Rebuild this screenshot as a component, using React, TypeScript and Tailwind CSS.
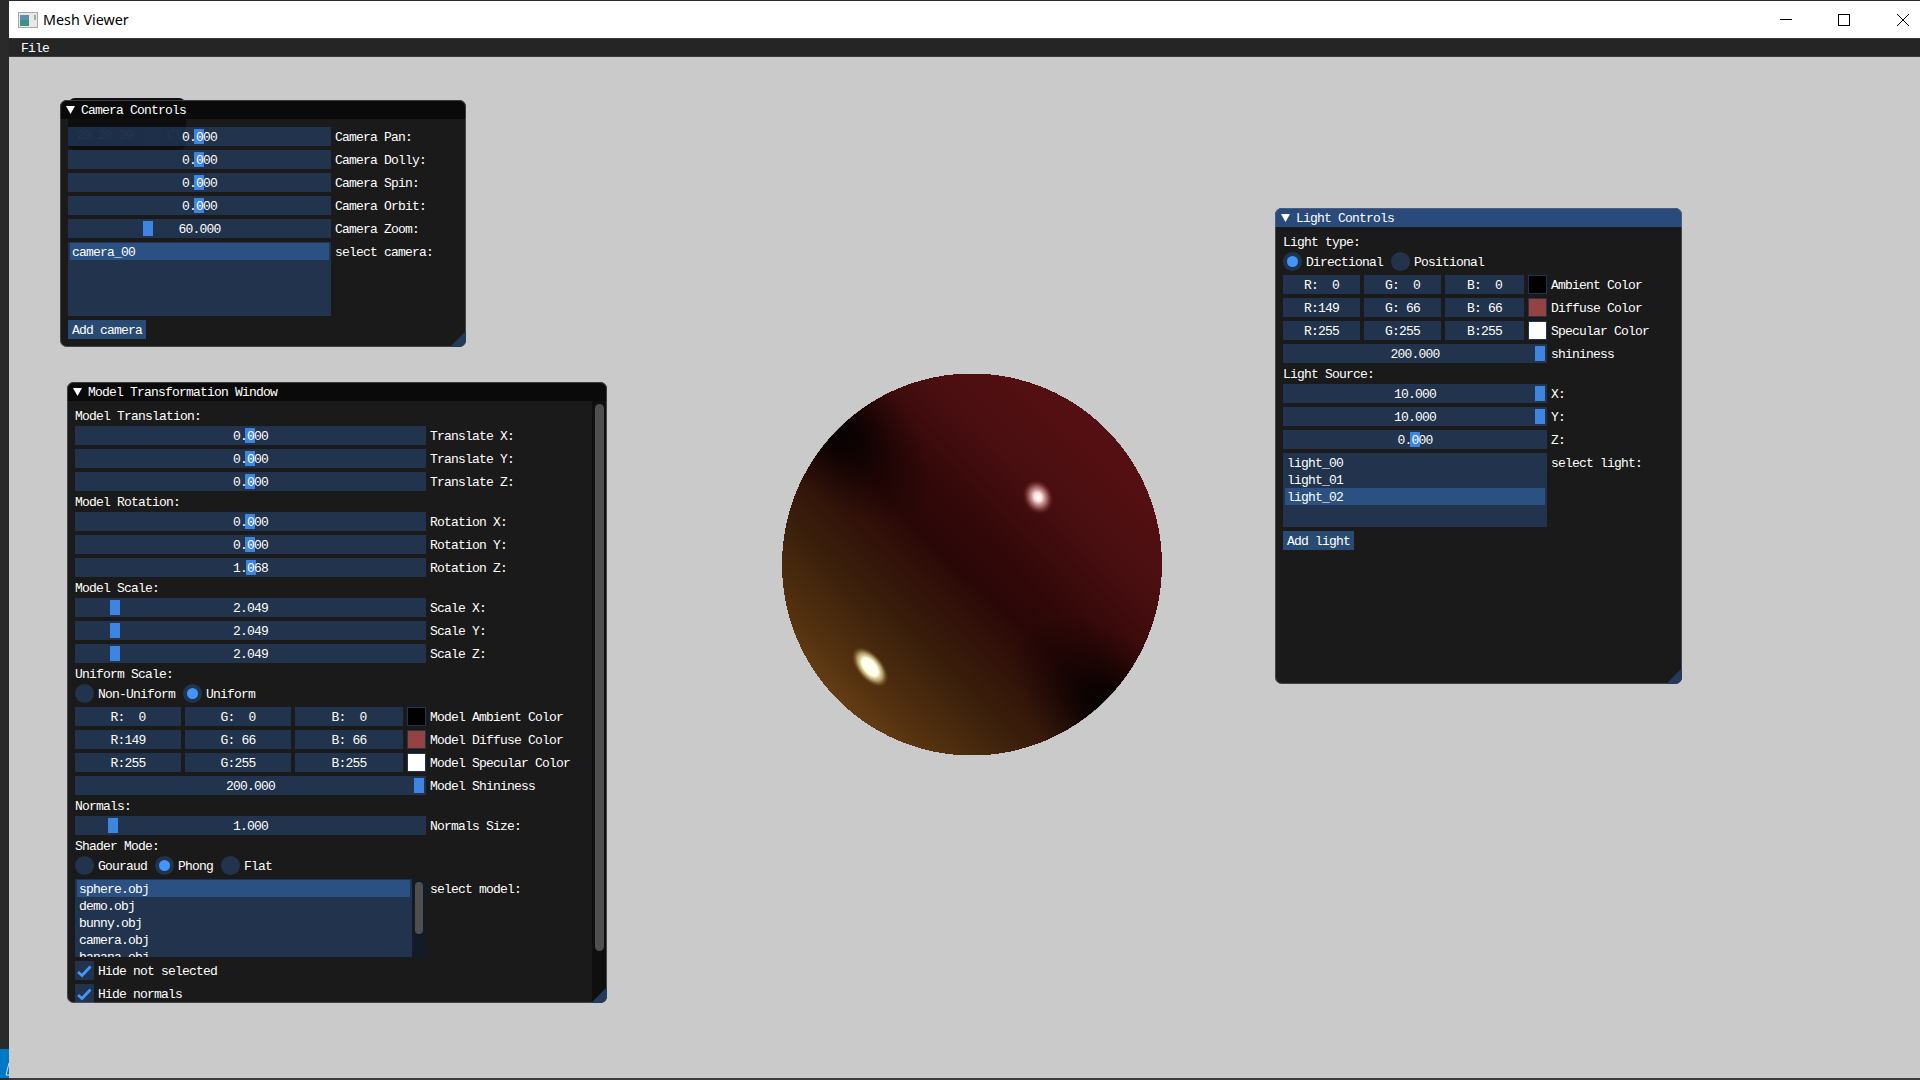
const frame = "bg-[#294a7a8a]";
const font = "font-['Liberation_Mono',monospace] text-[13px] tracking-[-0.8px] leading-[13px] text-white whitespace-pre";

// nudges the mono face down onto the row's baseline
function Txt({ children }: { children: React.ReactNode }) {
  return <span className="relative pt-0.5">{children}</span>;
}

function Line({ children }: { children: string }) {
  return <div className="h-[13px] pt-px">{children}</div>;
}

function Slider({ value, grab, width }: { value: string; grab: number; width: string }) {
  return (
    <div className={`relative flex h-[19px] items-center justify-center ${frame} ${width}`}>
      <div className="absolute top-0.5 bottom-0.5 w-2.5 bg-[#3d85e0]" style={{ left: grab }} />
      <Txt>{value}</Txt>
    </div>
  );
}

function Row({ label, gap, children }: { label: string; gap: string; children: React.ReactNode }) {
  return (
    <div className={`flex h-[19px] items-center ${gap}`}>
      {children}
      <Txt>{label}</Txt>
    </div>
  );
}

function Radio({ label, on }: { label: string; on?: boolean }) {
  return (
    <div className="mr-2 flex h-[19px] items-center gap-1">
      <div className={`flex size-[19px] items-center justify-center rounded-full ${frame}`}>
        {on && <div className="size-[11px] rounded-full bg-[#4296fa]" />}
      </div>
      <Txt>{label}</Txt>
    </div>
  );
}

function Checkbox({ label }: { label: string }) {
  return (
    <div className="flex h-[19px] shrink-0 items-center gap-1">
      <div className={`size-[19px] ${frame}`}>
        <svg width="19" height="19" viewBox="0 0 19 19">
          <path d="M3 11l4 3.5L15.5 5.5" fill="none" stroke="#4296fa" strokeWidth="2.8" />
        </svg>
      </div>
      <Txt>{label}</Txt>
    </div>
  );
}

function ColorRow({ label, vals, color, widths, gap }: { label: string; vals: string[]; color: string; widths: string[]; gap: string }) {
  return (
    <Row label={label} gap={gap}>
      <div className="flex gap-1">
        {vals.map((v, i) => (
          <div key={i} className={`flex h-[19px] items-center justify-center ${frame} ${widths[i]}`}>
            <Txt>{"RGB"[i] + ":" + v}</Txt>
          </div>
        ))}
        <div className={`size-[19px] border border-[#22344e] ${color}`} />
      </div>
    </Row>
  );
}

function Item({ name, selected }: { name: string; selected?: boolean }) {
  return (
    <div className={`flex h-[17px] items-center pl-0.5 ${selected ? "bg-[#4296fa4f]" : ""}`}>
      <Txt>{name}</Txt>
    </div>
  );
}

function Window({ title, active, className, children }: { title: string; active?: boolean; className: string; children: React.ReactNode }) {
  return (
    <div className={`absolute flex flex-col overflow-hidden rounded-[7px] bg-[#0f0f0ff0] outline outline-1 -outline-offset-1 outline-[#6e6e8080] ${font} ${className}`}>
      <div className={`flex h-[19px] shrink-0 items-center gap-[6px] pl-1.5 ${active ? "bg-[#294a7a]" : "bg-[#0a0a0a]"}`}>
        <svg width="9" height="8" viewBox="0 0 9 8" className="shrink-0">
          <path d="M0 0h9L4.5 8z" fill="#fff" />
        </svg>
        <Txt>{title}</Txt>
      </div>
      <div className="flex min-h-0 flex-1 flex-col gap-1 p-2">{children}</div>
      <div className="absolute right-0 bottom-0 size-4 bg-[#233a58] [clip-path:polygon(100%_0,100%_100%,0_100%)]" />
    </div>
  );
}

function Sphere() {
  return (
    <svg width="380" height="383" viewBox="0 0 380 383" className="absolute top-[316px] left-[773px]">
      <defs>
        <linearGradient id="body" gradientUnits="userSpaceOnUse" x1="50" y1="340" x2="320" y2="60">
          <stop offset="0" stopColor="#6c4216" />
          <stop offset="0.1" stopColor="#563310" />
          <stop offset="0.27" stopColor="#3b200b" />
          <stop offset="0.4" stopColor="#321209" />
          <stop offset="0.5" stopColor="#2a0707" />
          <stop offset="0.6" stopColor="#320808" />
          <stop offset="0.78" stopColor="#480e10" />
          <stop offset="0.95" stopColor="#540f12" />
        </linearGradient>
        <radialGradient id="dark">
          <stop offset="0" stopColor="#000" stopOpacity="0.95" />
          <stop offset="0.3" stopColor="#000" stopOpacity="0.7" />
          <stop offset="0.65" stopColor="#000" stopOpacity="0.28" />
          <stop offset="1" stopColor="#000" stopOpacity="0" />
        </radialGradient>
        <radialGradient id="pink">
          <stop offset="0" stopColor="#fff" />
          <stop offset="0.25" stopColor="#fde0e0" />
          <stop offset="0.6" stopColor="#c98888" stopOpacity="0.65" />
          <stop offset="1" stopColor="#70201f" stopOpacity="0" />
        </radialGradient>
        <radialGradient id="yellow">
          <stop offset="0" stopColor="#fff" />
          <stop offset="0.45" stopColor="#fffde0" />
          <stop offset="0.7" stopColor="#c8b47a" stopOpacity="0.8" />
          <stop offset="1" stopColor="#6a4a18" stopOpacity="0" />
        </radialGradient>
        <clipPath id="ball">
          <ellipse cx="190" cy="191.5" rx="190" ry="191" />
        </clipPath>
      </defs>
      <ellipse cx="190" cy="191.5" rx="190" ry="191" fill="url(#body)" shapeRendering="crispEdges" />
      <g clipPath="url(#ball)">
        <ellipse cx="45" cy="45" rx="130" ry="70" transform="rotate(45 45 45)" fill="url(#dark)" />
        <ellipse cx="335" cy="345" rx="130" ry="70" transform="rotate(45 335 345)" fill="url(#dark)" />
        <ellipse cx="256" cy="124" rx="15" ry="18" transform="rotate(-25 256 124)" fill="url(#pink)" />
        <ellipse cx="88" cy="294" rx="13" ry="24" transform="rotate(-40 88 294)" fill="url(#yellow)" />
      </g>
    </svg>
  );
}

export default function App() {
  const cam = "w-[263px]";
  const mod = "w-[351px]";
  const lit = "w-[264px]";
  const modelCells = ["w-[106px]", "w-[106px]", "w-[108px]"];
  const lightCells = ["w-[77px]", "w-[77px]", "w-[79px]"];

  return (
    <div className="flex h-[1080px] w-[1920px] overflow-hidden bg-[#2a2a2a]">
      {/* taskbar sliver on the left */}
      <div className="flex w-[9px] shrink-0 flex-col">
        <div className="flex-1" />
        <div className="flex h-[29px] items-end justify-end bg-[#0078c8]">
          <svg width="4" height="16" viewBox="0 0 4 16">
            <path d="M4 1L1 13h3" fill="none" stroke="#cfe6f5" />
          </svg>
        </div>
        <div className="h-0.5" />
      </div>

      <div className="flex min-w-0 flex-1 flex-col">
        <div className="h-px shrink-0" />
        <div className="flex h-[37px] shrink-0 items-center bg-white pl-[9px] font-['Noto_Sans',sans-serif] text-[14.3px] text-black">
          <svg width="20" height="16" viewBox="0 0 20 16" className="mr-[5px]">
            <rect x="0.5" y="0.5" width="19" height="15" fill="#e8e8e8" stroke="#a8a8a8" />
            <rect x="2" y="3" width="9" height="11" fill="#3f8f86" />
            <rect x="2" y="3" width="9" height="5" fill="#5a8fb0" />
            <rect x="16" y="3" width="2" height="5" fill="#8fb8a0" />
          </svg>
          <span>Mesh Viewer</span>
          <div className="ml-auto flex h-full items-center">
            <svg width="12" height="12" viewBox="0 0 12 12" className="mr-[46px]">
              <path d="M0 5.5h12" stroke="#000" />
            </svg>
            <svg width="12" height="12" viewBox="0 0 12 12" className="mr-[47px]">
              <rect x="0.5" y="0.5" width="11" height="11" fill="none" stroke="#000" />
            </svg>
            <svg width="12" height="12" viewBox="0 0 12 12" className="mr-[11px]">
              <path d="M0 0l12 12M12 0L0 12" stroke="#000" />
            </svg>
          </div>
        </div>
        <div className={`flex h-[19px] shrink-0 items-center border-y border-[#3a3a3a] bg-[#252525] pl-3 ${font}`}>
          <Txt>File</Txt>
        </div>

        <div className="relative flex-1 bg-[#cacaca]">
          <Sphere />

          {/* window that sits behind Camera Controls */}
          <div className={`absolute top-[41px] left-[59px] h-[52px] w-[118px] rounded-[7px] bg-[#0f0f0f] ${font}`}>
            <div className="absolute top-[31px] left-[9px]">20 20 20</div>
            <div className="absolute top-[29px] left-[76px] h-[19px] w-[17px] bg-[#3a3a3a]" />
            <div className="absolute top-[31px] left-[99px]">Clear</div>
          </div>

          <Window title="Camera Controls" className="top-[43px] left-[51px] h-[247px] w-[406px]">
            <Row label="Camera Pan:" gap="gap-1"><Slider value="0.000" grab={126} width={cam} /></Row>
            <Row label="Camera Dolly:" gap="gap-1"><Slider value="0.000" grab={126} width={cam} /></Row>
            <Row label="Camera Spin:" gap="gap-1"><Slider value="0.000" grab={126} width={cam} /></Row>
            <Row label="Camera Orbit:" gap="gap-1"><Slider value="0.000" grab={126} width={cam} /></Row>
            <Row label="Camera Zoom:" gap="gap-1"><Slider value="60.000" grab={75} width={cam} /></Row>
            <div className="flex h-[74px] gap-1">
              <div className={`h-full px-0.5 pt-px ${frame} ${cam}`}>
                <Item name="camera_00" selected />
              </div>
              <span className="pt-1">select camera:</span>
            </div>
            <div className="flex h-[19px] w-fit items-center bg-[#4296fa66] px-1"><Txt>Add camera</Txt></div>
          </Window>

          <Window title="Model Transformation Window" className="top-[325px] left-[58px] h-[621px] w-[540px]">
            <Line>Model Translation:</Line>
            <Row label="Translate X:" gap="gap-1"><Slider value="0.000" grab={170} width={mod} /></Row>
            <Row label="Translate Y:" gap="gap-1"><Slider value="0.000" grab={170} width={mod} /></Row>
            <Row label="Translate Z:" gap="gap-1"><Slider value="0.000" grab={170} width={mod} /></Row>
            <Line>Model Rotation:</Line>
            <Row label="Rotation X:" gap="gap-1"><Slider value="0.000" grab={170} width={mod} /></Row>
            <Row label="Rotation Y:" gap="gap-1"><Slider value="0.000" grab={170} width={mod} /></Row>
            <Row label="Rotation Z:" gap="gap-1"><Slider value="1.068" grab={171} width={mod} /></Row>
            <Line>Model Scale:</Line>
            <Row label="Scale X:" gap="gap-1"><Slider value="2.049" grab={35} width={mod} /></Row>
            <Row label="Scale Y:" gap="gap-1"><Slider value="2.049" grab={35} width={mod} /></Row>
            <Row label="Scale Z:" gap="gap-1"><Slider value="2.049" grab={35} width={mod} /></Row>
            <Line>Uniform Scale:</Line>
            <div className="flex">
              <Radio label="Non-Uniform" />
              <Radio label="Uniform" on />
            </div>
            <ColorRow label="Model Ambient Color" vals={["  0", "  0", "  0"]} color="bg-black" widths={modelCells} gap="gap-1" />
            <ColorRow label="Model Diffuse Color" vals={["149", " 66", " 66"]} color="bg-[#954242]" widths={modelCells} gap="gap-1" />
            <ColorRow label="Model Specular Color" vals={["255", "255", "255"]} color="bg-white" widths={modelCells} gap="gap-1" />
            <Row label="Model Shininess" gap="gap-1"><Slider value="200.000" grab={339} width={mod} /></Row>
            <Line>Normals:</Line>
            <Row label="Normals Size:" gap="gap-1"><Slider value="1.000" grab={33} width={mod} /></Row>
            <Line>Shader Mode:</Line>
            <div className="flex">
              <Radio label="Gouraud" />
              <Radio label="Phong" on />
              <Radio label="Flat" />
            </div>
            <div className="flex h-[78px] shrink-0 gap-1">
              <div className={`relative flex h-full overflow-hidden ${frame} ${mod}`}>
                <div className="flex-1 px-0.5 pt-px">
                  <Item name="sphere.obj" selected />
                  {["demo.obj", "bunny.obj", "camera.obj", "banana.obj"].map((name) => (
                    <Item key={name} name={name} />
                  ))}
                </div>
                <div className="w-3.5 bg-[#131b27] pt-[3px] pl-[3px]">
                  <div className="h-[52px] w-2 rounded-full bg-[#4f4f4f]" />
                </div>
              </div>
              <span className="pt-1">select model:</span>
            </div>
            <Checkbox label="Hide not selected" />
            <Checkbox label="Hide normals" />
            {/* main scrollbar */}
            <div className="absolute top-[19px] right-px bottom-px w-3.5 bg-[#0f0f0f] pt-[3px] pl-[3px]">
              <div className="h-[547px] w-[9px] rounded-full bg-[#4f4f4f]" />
            </div>
          </Window>

          <Window title="Light Controls" active className="top-[151px] left-[1266px] h-[476px] w-[407px]">
            <Line>Light type:</Line>
            <div className="flex">
              <Radio label="Directional" on />
              <Radio label="Positional" />
            </div>
            <ColorRow label="Ambient Color" vals={["  0", "  0", "  0"]} color="bg-black" widths={lightCells} gap="gap-1" />
            <ColorRow label="Diffuse Color" vals={["149", " 66", " 66"]} color="bg-[#954242]" widths={lightCells} gap="gap-1" />
            <ColorRow label="Specular Color" vals={["255", "255", "255"]} color="bg-white" widths={lightCells} gap="gap-1" />
            <Row label="shininess" gap="gap-1"><Slider value="200.000" grab={252} width={lit} /></Row>
            <Line>Light Source:</Line>
            <Row label="X:" gap="gap-1"><Slider value="10.000" grab={252} width={lit} /></Row>
            <Row label="Y:" gap="gap-1"><Slider value="10.000" grab={252} width={lit} /></Row>
            <Row label="Z:" gap="gap-1"><Slider value="0.000" grab={127} width={lit} /></Row>
            <div className="flex h-[74px] gap-1">
              <div className={`h-full px-0.5 pt-px ${frame} ${lit}`}>
                <Item name="light_00" />
                <Item name="light_01" />
                <Item name="light_02" selected />
              </div>
              <span className="pt-1">select light:</span>
            </div>
            <div className="flex h-[19px] w-fit items-center bg-[#4296fa66] px-1"><Txt>Add light</Txt></div>
          </Window>
        </div>

        <div className="h-0.5 shrink-0 bg-[#3b3b3b]" />
      </div>
    </div>
  );
}
